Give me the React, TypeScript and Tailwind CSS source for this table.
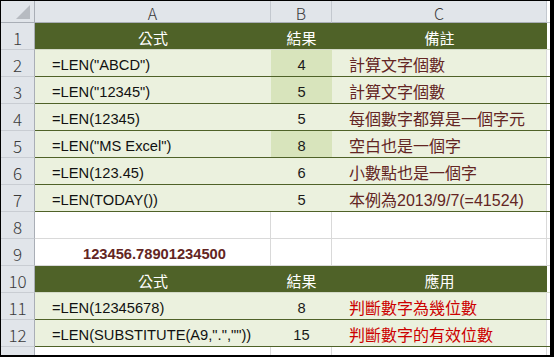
const arial = "[font-family:'Liberation_Sans','Noto_Sans_CJK_TC',sans-serif]";
const cjk = "[font-family:'Noto_Sans_CJK_TC','Liberation_Sans',sans-serif]";
const thin = "[font-family:'Noto_Sans_CJK_JP','DejaVu_Sans',sans-serif]";

type Row = {
  n: number;
  a?: string;
  b?: string;
  c?: string;
  hl?: boolean;
  kind: "head" | "green" | "white";
  line?: "dark" | "light";
  cRed?: boolean;
  aBold?: boolean;
};

const rows: Row[] = [
  { n: 1, a: "公式", b: "結果", c: "備註", kind: "head", line: "light" },
  { n: 2, a: '=LEN("ABCD")', b: "4", c: "計算文字個數", hl: true, kind: "green", line: "dark" },
  { n: 3, a: '=LEN("12345")', b: "5", c: "計算文字個數", hl: true, kind: "green", line: "dark" },
  { n: 4, a: "=LEN(12345)", b: "5", c: "每個數字都算是一個字元", kind: "green", line: "dark" },
  { n: 5, a: '=LEN("MS Excel")', b: "8", c: "空白也是一個字", hl: true, kind: "green", line: "dark" },
  { n: 6, a: "=LEN(123.45)", b: "6", c: "小數點也是一個字", kind: "green", line: "dark" },
  { n: 7, a: "=LEN(TODAY())", b: "5", c: "本例為2013/9/7(=41524)", kind: "green", line: "dark" },
  { n: 8, kind: "white" },
  { n: 9, a: "123456.78901234500", kind: "white", aBold: true },
  { n: 10, a: "公式", b: "結果", c: "應用", kind: "head", line: "light" },
  { n: 11, a: "=LEN(12345678)", b: "8", c: "判斷數字為幾位數", kind: "green", line: "dark", cRed: true },
  { n: 12, a: '=LEN(SUBSTITUTE(A9,".",""))', b: "15", c: "判斷數字的有效位數", kind: "green", line: "dark", cRed: true },
];

function RowHeader({ n }: { n: number }) {
  return (
    <div
      className={`${thin} w-[34px] shrink-0 h-full flex items-center justify-center bg-[#e1e5ea] border-r border-b border-r-[#a9aeb6] border-b-[#c9cdd3] text-[17px] font-light text-[#3a3a3a] leading-none pt-[3px]`}
    >
      {n}
    </div>
  );
}

function DataRow({ r }: { r: Row }) {
  const lineCls =
    r.kind === "white"
      ? "border-b-[#d9d9d9]"
      : r.line === "dark"
        ? "border-b-[#4f6228]"
        : "border-b-[#d4dac8]";
  const bg = r.kind === "head" ? "bg-[#4f6228]" : r.kind === "green" ? "bg-[#ebf1de]" : "bg-white";
  const vline = r.kind === "white" ? "border-r border-r-[#d9d9d9]" : "";
  return (
    <div className="flex h-[27px]">
      <RowHeader n={r.n} />
      <div className={`flex flex-1 border-b ${lineCls} ${bg}`}>
        {r.kind === "head" ? (
          <>
            <div className={`${cjk} w-[236px] flex items-end justify-center pb-[3px] text-[15px] leading-[17px] text-white`}>{r.a}</div>
            <div className={`${cjk} w-[61px] flex items-end justify-center pb-[3px] text-[15px] leading-[17px] text-white`}>{r.b}</div>
            <div className={`${cjk} w-[215px] flex items-end justify-center pb-[3px] text-[15px] leading-[17px] text-white`}>{r.c}</div>
          </>
        ) : (
          <>
            <div
              className={`${arial} w-[236px] flex items-end pb-[2px] text-[14.7px] leading-[17px] ${vline} ${
                r.aBold ? "justify-center font-bold text-[#632523] pl-[4px]" : "pl-[17px] text-[#111]"
              }`}
            >
              {r.a}
            </div>
            <div
              className={`${arial} w-[61px] flex items-end justify-center pb-[2px] text-[14.7px] leading-[17px] text-[#1a1a1a] ${vline} ${
                r.hl ? "bg-[#d8e4bc]" : ""
              }`}
            >
              {r.b}
            </div>
            <div
              className={`${arial} w-[215px] flex items-end pl-[17px] pb-[2px] text-[16px] leading-[17px] border-r border-r-[#d9d9d9] ${
                r.cRed ? "text-[#cc0000]" : "text-[#632523]"
              }`}
            >
              {r.c}
            </div>
          </>
        )}
        <div className="flex-1 bg-white" />
      </div>
    </div>
  );
}

export default function App() {
  return (
    <div className="w-[554px] h-[357px] bg-white border-l border-t border-r-4 border-b-2 border-black flex flex-col overflow-hidden">
      <div className="flex h-[22px] shrink-0">
        <div className="w-[34px] shrink-0 bg-[#e1e5ea] border-r border-b border-[#a9aeb6] flex items-end justify-end pr-[4px] pb-[3px]">
          <svg width="14" height="14" viewBox="0 0 14 14">
            <polygon points="14,0 14,14 0,14" fill="#b7bbc1" />
          </svg>
        </div>
        {[
          ["A", "w-[236px]"],
          ["B", "w-[61px]"],
          ["C", "w-[215px]"],
        ].map(([l, w]) => (
          <div
            key={l}
            className={`${thin} ${w} shrink-0 bg-[#e1e5ea] border-r border-b border-r-[#c3c8cf] border-b-[#a9aeb6] flex items-center justify-center text-[16px] font-light text-[#3a3a3a] leading-none pt-[2px]`}
          >
            {l}
          </div>
        ))}
        <div className="flex-1 bg-white border-b border-[#c3c8cf]" />
      </div>
      {rows.map((r) => (
        <DataRow key={r.n} r={r} />
      ))}
      <div className="flex flex-1">
        <div className="w-[34px] shrink-0 bg-[#e1e5ea] border-r border-[#a9aeb6]" />
        <div className="w-[236px] border-r border-[#d9d9d9]" />
        <div className="w-[61px] border-r border-[#d9d9d9]" />
        <div className="w-[215px] border-r border-[#d9d9d9]" />
        <div className="flex-1" />
      </div>
    </div>
  );
}
